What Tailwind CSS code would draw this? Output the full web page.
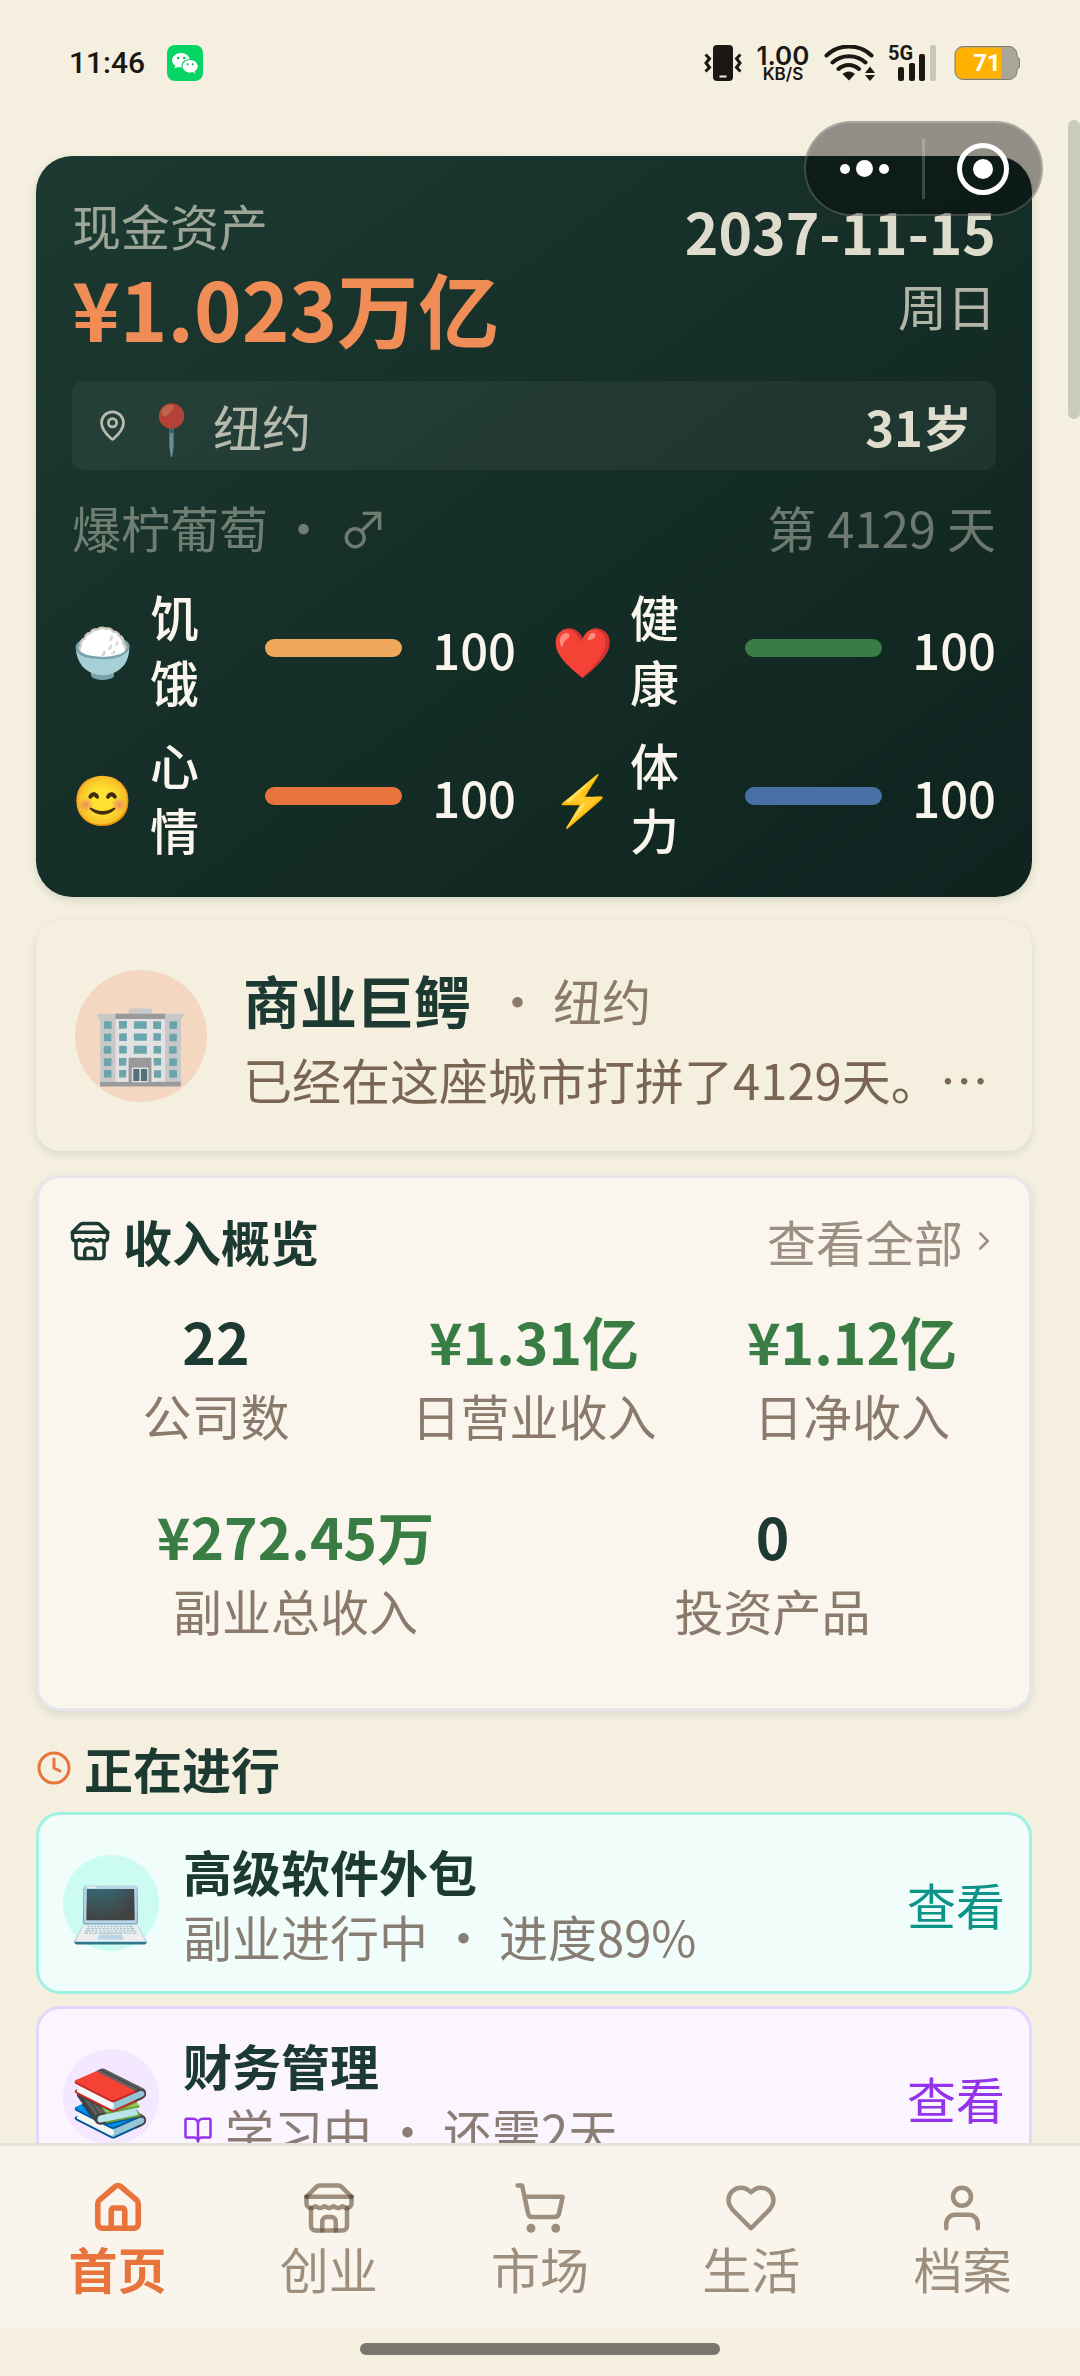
<!DOCTYPE html>
<html lang="zh-CN">
<head>
<meta charset="utf-8">
<meta name="viewport" content="width=device-width, initial-scale=1">
<title>首页</title>
<script src="https://cdn.jsdelivr.net/npm/@tailwindcss/browser@4"></script>
</head>
<body class="bg-[#f5efdf]">
<div class="relative flex h-screen flex-col overflow-hidden bg-[#f5efdf] font-['Noto_Sans_CJK_SC','Noto_Color_Emoji',sans-serif] text-[49px] leading-[65px] text-[#1c3a31]">

  <!-- Status bar -->
  <header class="flex h-[120px] shrink-0 items-center justify-between pt-1.5 pr-[60px] pb-0 pl-[69px] text-[#1a1714]">
    <div class="flex items-center gap-[22px]">
      <span class="font-['Roboto',sans-serif] text-[30px] leading-9 font-medium">11:46</span>
      <svg class="size-9" viewBox="0 0 36 36" aria-label="微信">
        <rect width="36" height="36" rx="8" fill="#06d566"/>
        <path fill="#fff" d="M14 8c-5 0-8.900 3.300-8.900 7.300 0 2.300 1.300 4.300 3.200 5.600l-.7 2.600 3-1.500c1 .3 2.200.5 3.300.5h.8c-.1-.5-.2-1-.2-1.500 0-3.900 3.700-6.900 8.200-6.900C22 10.600 18.400 8 14 8z"/>
        <path fill="#fff" d="M30.700 21.200c0-3.500-3.400-6.200-7.500-6.200s-7.600 2.700-7.600 6.200 3.400 6.300 7.600 6.300c.9 0 1.800-.1 2.600-.4l2.500 1.400-.6-2.300c1.800-1.100 3-2.900 3-5z"/>
        <g fill="#06b857"><circle cx="11.200" cy="13" r="1.200"/><circle cx="17.200" cy="13" r="1.200"/><circle cx="20.700" cy="19.200" r="1"/><circle cx="25.800" cy="19.200" r="1"/></g>
      </svg>
    </div>
    <div class="flex items-center">
      <svg class="h-9 w-[38px]" viewBox="0 0 38 36" fill="none" stroke="#1a1714" stroke-width="3" aria-label="振动">
        <rect x="9" y="0" width="20" height="36" rx="4" fill="#1a1714" stroke="none"/>
        <path d="M15.500 31.500h7" stroke="#f5efdf" stroke-width="2"/>
        <path d="M1.500 9.500l4 4-3.500 4.500 3.500 4.500-4 4M36.500 9.500l-4 4 3.500 4.500-3.500 4.500 4 4"/>
      </svg>
      <div class="ml-3 flex w-[58px] flex-col items-center font-['Inter',sans-serif]">
        <span class="text-[26px] leading-[22px] font-semibold">1.00</span>
        <span class="text-[17px] leading-[15px] font-semibold">KB/S</span>
      </div>
      <svg class="ml-3 h-9 w-[52px]" viewBox="0 0 52 36" fill="none" stroke="#1a1714" stroke-width="4" stroke-linecap="round" aria-label="无线网络">
        <path d="M2.500 10.500C15-1.500 35-1.500 47.500 10.500M8.500 17.500c9-8.500 24-8.500 33 0M14.500 24c6-5.500 14.500-5.500 20.500 0"/>
        <path d="M18.500 29c3.500-3.500 9-3.500 12.500 0L25 35.500z" fill="#1a1714" stroke="none"/>
        <path d="M46 21.500l5 6.500H41zM46 36l5-6H41z" fill="#1a1714" stroke="none"/>
      </svg>
      <div class="relative ml-3 h-9 w-[50px]">
        <span class="absolute -top-0.5 left-0 font-['Roboto',sans-serif] text-[20px] leading-5 font-bold">5G</span>
        <svg class="size-full" viewBox="0 0 50 36" aria-label="信号"><g fill="#1a1714"><rect x="10" y="22" width="6" height="14" rx="2"/><rect x="21" y="18" width="6" height="18" rx="2"/><rect x="31" y="9" width="6" height="27" rx="2"/></g><rect x="42" y="0" width="6" height="36" rx="2" fill="#c9c5b7"/></svg>
      </div>
      <div class="relative ml-4 h-[34px] w-[66px]">
        <svg class="size-full" viewBox="0 0 66 34" aria-label="电池">
          <path d="M9 .5h46a8 8 0 0 1 8 8v2.500q2.500.5 2.500 3v6q0 2.500-2.500 3v2.500a8 8 0 0 1-8 8H9a8 8 0 0 1-8-8v-17a8 8 0 0 1 8-8z" fill="#a9a599" stroke="#857c66"/>
          <path d="M9 1.500h38.500v31H9a7 7 0 0 1-7-7v-17a7 7 0 0 1 7-7z" fill="#ffb300"/>
        </svg>
        <span class="absolute inset-0 text-center font-['Roboto',sans-serif] text-[24px] leading-[34px] font-bold text-white">71</span>
      </div>
    </div>
  </header>

  <main class="min-h-0 flex-1 overflow-hidden pt-9 pr-12 pl-9">

    <section class="rounded-[36px] bg-linear-to-br from-[#1c3a31] to-[#0f231f] p-9 text-[#f5efdf] shadow-[0_3px_9px_rgba(28,58,49,0.15)]">
      <div class="mb-6 flex justify-between">
        <div>
          <p class="text-[#f5efdf]/60">现金资产</p>
          <p class="text-[81px] leading-[100px] font-bold text-[#f08c55]">¥1.023万亿</p>
        </div>
        <div class="text-right">
          <p class="mb-1 text-[57px] leading-[76px] font-bold text-[#f5efdf]/90">2037-11-15</p>
          <p class="text-[#f5efdf]/70">周日</p>
        </div>
      </div>
      <div class="flex items-center justify-between rounded-xl bg-white/5 px-6 py-3">
        <div class="flex items-center gap-3 text-[#f5efdf]/70">
          <svg class="size-[33px]" viewBox="0 0 24 24" fill="none" stroke="currentColor" stroke-width="2" stroke-linecap="round" stroke-linejoin="round"><path d="M20 10c0 4.993-5.539 10.193-7.399 11.799a1 1 0 0 1-1.202 0C9.539 20.193 4 14.993 4 10a8 8 0 0 1 16 0"/><circle cx="12" cy="10" r="3"/></svg>
          <span>📍 纽约</span>
        </div>
        <span class="font-bold text-[#f5efdf]/90">31岁</span>
      </div>
      <div class="mt-6 flex justify-between text-[#f5efdf]/40">
        <span>爆柠葡萄 • ♂</span>
        <span>第 4129 天</span>
      </div>
      <div class="mt-6 grid grid-cols-2 gap-x-9 gap-y-[18px] font-medium text-[#faf6ee]">
        <div class="flex items-center">
          <span class="w-[61px]">🍚</span><span class="ml-[17px] w-[61px] break-all">饥饿</span>
          <div class="ml-[54px] h-[18px] flex-1 rounded-full bg-[#f0a95b]"></div><span class="w-[114px] text-right">100</span>
        </div>
        <div class="flex items-center">
          <span class="w-[61px]">❤️</span><span class="ml-[17px] w-[61px] break-all">健康</span>
          <div class="ml-[54px] h-[18px] flex-1 rounded-full bg-[#3a7d44]"></div><span class="w-[114px] text-right">100</span>
        </div>
        <div class="flex items-center">
          <span class="w-[61px]">😊</span><span class="ml-[17px] w-[61px] break-all">心情</span>
          <div class="ml-[54px] h-[18px] flex-1 rounded-full bg-[#e8743b]"></div><span class="w-[114px] text-right">100</span>
        </div>
        <div class="flex items-center">
          <span class="w-[61px]">⚡</span><span class="ml-[17px] w-[61px] break-all">体力</span>
          <div class="ml-[54px] h-[18px] flex-1 rounded-full bg-[#4a6fa5]"></div><span class="w-[114px] text-right">100</span>
        </div>
      </div>
    </section>

    <section class="mt-6 flex items-center gap-9 rounded-3xl bg-[#f5efdf] px-[39px] py-10 shadow-[0_3px_9px_rgba(28,58,49,0.12)]">
      <div class="flex size-[132px] shrink-0 items-center justify-center rounded-full bg-[#f3d7c1] text-[78px]">🏢</div>
      <div class="min-w-0">
        <div class="mb-[9px] flex items-center gap-[22px]">
          <h2 class="text-[57px] leading-[76px] font-bold">商业巨鳄</h2>
          <span class="text-[#8b7a6c]">• 纽约</span>
        </div>
        <p class="whitespace-nowrap text-[#7a6552]">已经在这座城市打拼了4129天。…</p>
      </div>
    </section>

    <section class="mt-6 rounded-3xl border-3 border-[#e5e7eb] bg-[#faf6ee] pt-[30px] pb-[66px] shadow-[0_3px_9px_rgba(28,58,49,0.12)]">
      <div class="flex items-center justify-between px-[30px]">
        <h2 class="flex items-center gap-3 font-bold">
          <svg class="size-[42px]" viewBox="0 0 24 24" fill="none" stroke="currentColor" stroke-width="2" stroke-linecap="round" stroke-linejoin="round"><path d="m2 7 4.410-4.410A2 2 0 0 1 7.830 2h8.340a2 2 0 0 1 1.420.590L22 7"/><path d="M4 12v8a2 2 0 0 0 2 2h12a2 2 0 0 0 2-2v-8"/><path d="M15 22v-4a2 2 0 0 0-2-2h-2a2 2 0 0 0-2 2v4"/><path d="M2 7h20"/><path d="M22 7v3a2 2 0 0 1-2 2a2.700 2.700 0 0 1-1.590-.630.700.700 0 0 0-.820 0A2.700 2.700 0 0 1 16 12a2.700 2.700 0 0 1-1.590-.630.700.700 0 0 0-.820 0A2.700 2.700 0 0 1 12 12a2.700 2.700 0 0 1-1.590-.630.700.700 0 0 0-.820 0A2.700 2.700 0 0 1 8 12a2.700 2.700 0 0 1-1.590-.630.700.700 0 0 0-.820 0A2.700 2.700 0 0 1 4 12a2 2 0 0 1-2-2V7"/></svg>
          收入概览
        </h2>
        <a href="#" class="flex items-center gap-1.5 text-[#9c8e81]">查看全部
          <svg class="size-[30px]" viewBox="0 0 24 24" fill="none" stroke="currentColor" stroke-width="2" stroke-linecap="round" stroke-linejoin="round"><path d="m9 18 6-6-6-6"/></svg>
        </a>
      </div>
      <div class="mt-[29px] grid grid-cols-6 gap-y-[50px] px-[18px] text-center text-[#8b7a6c]">
        <div class="col-span-2"><p class="mb-1 text-[57px] leading-[76px] font-bold text-[#1c3a31]">22</p><p>公司数</p></div>
        <div class="col-span-2"><p class="mb-1 text-[57px] leading-[76px] font-bold text-[#3a7d44]">¥1.31亿</p><p>日营业收入</p></div>
        <div class="col-span-2"><p class="mb-1 text-[57px] leading-[76px] font-bold text-[#3a7d44]">¥1.12亿</p><p>日净收入</p></div>
        <div class="col-span-3"><p class="mb-1 text-[57px] leading-[76px] font-bold text-[#3a7d44]">¥272.45万</p><p>副业总收入</p></div>
        <div class="col-span-3"><p class="mb-1 text-[57px] leading-[76px] font-bold text-[#1c3a31]">0</p><p>投资产品</p></div>
      </div>
    </section>

    <h2 class="mt-6 flex items-center gap-3 font-bold">
      <svg class="size-9 text-[#e8743b]" viewBox="0 0 24 24" fill="none" stroke="currentColor" stroke-width="2" stroke-linecap="round" stroke-linejoin="round"><circle cx="12" cy="12" r="10"/><path d="M12 6v6l4 2"/></svg>
      正在进行
    </h2>

    <article class="mt-3 flex items-center gap-6 rounded-3xl border-3 border-[#a0f2e0] bg-[#f0fdfa] px-6 py-[23px]">
      <div class="flex size-24 shrink-0 items-center justify-center rounded-full bg-[#ccfbf1] text-[65px]">💻</div>
      <div class="flex-1">
        <h3 class="font-bold">高级软件外包</h3>
        <p class="text-[#887d72]">副业进行中 • 进度89%</p>
      </div>
      <button class="text-[#0d9488]">查看</button>
    </article>

    <article class="mt-3 flex items-center gap-6 rounded-3xl border-3 border-[#e9d5fb] bg-[#faf5ff] px-6 py-[23px]">
      <div class="flex size-24 shrink-0 items-center justify-center rounded-full bg-[#f3e8ff] text-[65px]">📚</div>
      <div class="flex-1">
        <h3 class="font-bold">财务管理</h3>
        <p class="flex items-center gap-3 text-[#8b7d75]">
          <svg class="size-[30px] text-[#9333ea]" viewBox="0 0 24 24" fill="none" stroke="currentColor" stroke-width="2" stroke-linecap="round" stroke-linejoin="round"><path d="M12 7v14"/><path d="M3 18a1 1 0 0 1-1-1V4a1 1 0 0 1 1-1h5a4 4 0 0 1 4 4 4 4 0 0 1 4-4h5a1 1 0 0 1 1 1v13a1 1 0 0 1-1 1h-6a3 3 0 0 0-3 3 3 3 0 0 0-3-3z"/></svg>
          学习中 • 还需2天
        </p>
      </div>
      <button class="text-[#9333ea]">查看</button>
    </article>
  </main>

  <!-- Tab bar -->
  <nav class="grid shrink-0 grid-cols-5 border-t-3 border-[#e5e2d9] bg-[#f9f5ec] px-3 pt-[35px] pb-7 text-[#604936]/60">
    <a href="#" class="flex flex-col items-center font-bold text-[#e8743b]">
      <svg class="size-[54px]" viewBox="0 0 24 24" fill="none" stroke="currentColor" stroke-width="2.5" stroke-linecap="round" stroke-linejoin="round"><path d="M15 21v-8a1 1 0 0 0-1-1h-4a1 1 0 0 0-1 1v8"/><path d="M3 10a2 2 0 0 1 .709-1.528l7-5.999a2 2 0 0 1 2.582 0l7 5.999A2 2 0 0 1 21 10v9a2 2 0 0 1-2 2H5a2 2 0 0 1-2-2z"/></svg>首页</a>
    <a href="#" class="flex flex-col items-center">
      <svg class="size-[54px]" viewBox="0 0 24 24" fill="none" stroke="currentColor" stroke-width="2" stroke-linecap="round" stroke-linejoin="round"><path d="m2 7 4.410-4.410A2 2 0 0 1 7.830 2h8.340a2 2 0 0 1 1.420.590L22 7"/><path d="M4 12v8a2 2 0 0 0 2 2h12a2 2 0 0 0 2-2v-8"/><path d="M15 22v-4a2 2 0 0 0-2-2h-2a2 2 0 0 0-2 2v4"/><path d="M2 7h20"/><path d="M22 7v3a2 2 0 0 1-2 2a2.700 2.700 0 0 1-1.590-.630.700.700 0 0 0-.820 0A2.700 2.700 0 0 1 16 12a2.700 2.700 0 0 1-1.590-.630.700.700 0 0 0-.820 0A2.700 2.700 0 0 1 12 12a2.700 2.700 0 0 1-1.590-.630.700.700 0 0 0-.820 0A2.700 2.700 0 0 1 8 12a2.700 2.700 0 0 1-1.590-.630.700.700 0 0 0-.820 0A2.700 2.700 0 0 1 4 12a2 2 0 0 1-2-2V7"/></svg>创业</a>
    <a href="#" class="flex flex-col items-center">
      <svg class="size-[54px]" viewBox="0 0 24 24" fill="none" stroke="currentColor" stroke-width="2" stroke-linecap="round" stroke-linejoin="round"><circle cx="8" cy="21" r="1"/><circle cx="19" cy="21" r="1"/><path d="M2.050 2.050h2l2.660 12.420a2 2 0 0 0 2 1.580h9.780a2 2 0 0 0 1.950-1.570l1.650-7.430H5.120"/></svg>市场</a>
    <a href="#" class="flex flex-col items-center">
      <svg class="size-[54px]" viewBox="0 0 24 24" fill="none" stroke="currentColor" stroke-width="2" stroke-linecap="round" stroke-linejoin="round"><path d="M19 14c1.490-1.460 3-3.210 3-5.500A5.500 5.500 0 0 0 16.500 3c-1.760 0-3 .500-4.500 2-1.500-1.500-2.740-2-4.500-2A5.500 5.500 0 0 0 2 8.500c0 2.300 1.500 4.050 3 5.500l7 7Z"/></svg>生活</a>
    <a href="#" class="flex flex-col items-center">
      <svg class="size-[54px]" viewBox="0 0 24 24" fill="none" stroke="currentColor" stroke-width="2" stroke-linecap="round" stroke-linejoin="round"><path d="M19 21v-2a4 4 0 0 0-4-4H9a4 4 0 0 0-4 4v2"/><circle cx="12" cy="7" r="4"/></svg>档案</a>
  </nav>
  <footer class="flex h-12 shrink-0 justify-center pt-[15px]"><div class="h-3 w-1/3 rounded-full bg-[#7b776f]"></div></footer>

  <!-- Mini-program capsule, floating over the page -->
  <div class="absolute top-[121px] right-[37px] flex h-[95px] w-[239px] items-center rounded-full border-2 border-white/20 bg-black/40">
    <button class="flex flex-1 items-center justify-center gap-1.5" aria-label="更多"><i class="size-2.5 rounded-full bg-white"></i><i class="size-[17px] rounded-full bg-white"></i><i class="size-2.5 rounded-full bg-white"></i></button>
    <div class="h-[60px] w-[3px] bg-white/20"></div>
    <button class="flex flex-1 items-center justify-center" aria-label="关闭"><span class="flex size-[52px] items-center justify-center rounded-full border-5 border-white"><i class="size-5 rounded-full bg-white"></i></span></button>
  </div>
  <div class="absolute top-[120px] right-0 h-[299px] w-3 rounded-full bg-[#c9cbbb]"></div>
</div>
</body>
</html>
